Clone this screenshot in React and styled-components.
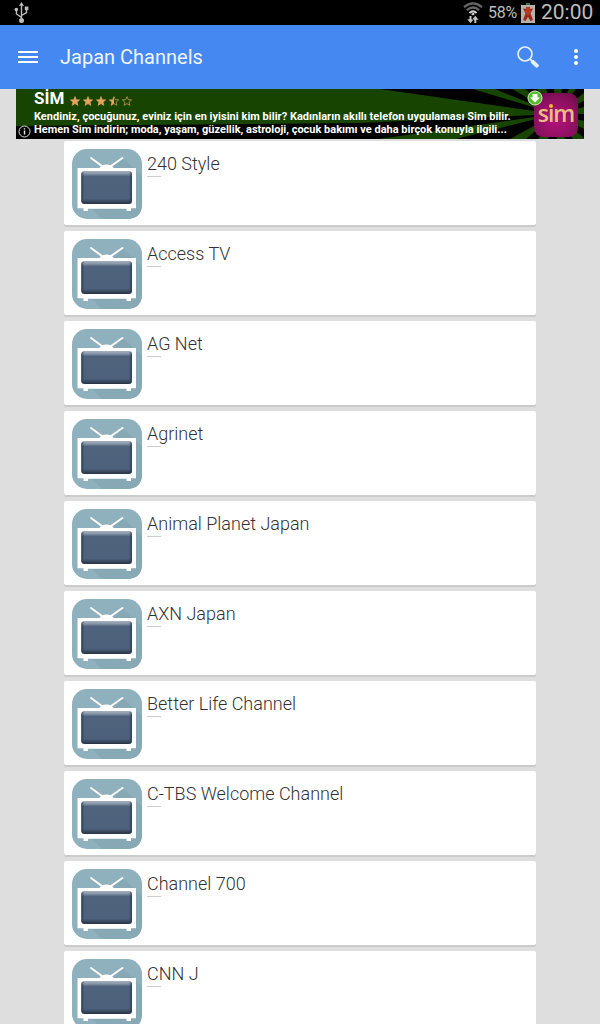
import React from 'react';
import styled, { createGlobalStyle } from 'styled-components';

const channels = [
  '240 Style',
  'Access TV',
  'AG Net',
  'Agrinet',
  'Animal Planet Japan',
  'AXN Japan',
  'Better Life Channel',
  'C-TBS Welcome Channel',
  'Channel 700',
  'CNN J',
];

const starPath = 'M5 0.6 6.3 3.7 9.6 3.9 7.1 6.1 7.9 9.4 5 7.6 2.1 9.4 2.9 6.1 0.4 3.9 3.7 3.7Z';

const App = () => (
  <Screen>
    <GlobalStyle />
    <StatusBar>
      <UsbIcon />
      <StatusRight>
        <WifiIcon />
        <Battery>58%</Battery>
        <BatteryIcon />
        <Clock>20:00</Clock>
      </StatusRight>
    </StatusBar>
    <Toolbar>
      <MenuIcon />
      <Title>Japan Channels</Title>
      <SearchIcon />
      <MoreIcon />
    </Toolbar>
    <Banner />
    <List>
      {channels.map((name) => (
        <Card key={name}>
          <TvIcon />
          <Info>
            <Name>{name}</Name>
            <Line />
          </Info>
        </Card>
      ))}
    </List>
  </Screen>
);
export default App;

const UsbIcon = () => (
  <svg width="15" height="22" viewBox="0 0 15 22" fill="#bdbdbd">
    <g fill="none" stroke="#bdbdbd" strokeWidth="1.4">
      <path d="M7.5 3v15M7.5 15.5 2.5 12V8.5M7.5 13.5l5-3V7.5" />
    </g>
    <path d="M7.5 0 10 3.8H5Z" />
    <circle cx="7.5" cy="18.5" r="2.5" />
    <circle cx="2.3" cy="7.6" r="1.8" />
    <path d="M10.8 4.5h3.6v3.6h-3.6z" />
  </svg>
);

const WifiIcon = () => (
  <svg width="20" height="23" viewBox="0 0 20 23" fill="none">
    <path d="M1 6.2Q10-1.5 19 6.2" stroke="#666" strokeWidth="2.2" />
    <path d="M3.8 9.2Q10 3.8 16.2 9.2" stroke="#666" strokeWidth="2.2" />
    <path d="M6.4 12Q10 8.8 13.6 12" stroke="#d0d0d0" strokeWidth="2" />
    <path d="M10 11.700 12 13 10 14.500 8 13Z" fill="#d0d0d0" />
    <path d="M7.500 15v4M12.300 22v-4" stroke="#c4c4c4" strokeWidth="2" />
    <path d="M4.300 18.300h6.400L7.500 22.300zM9.100 18.700h6.400l-3.200-3.900z" fill="#c4c4c4" />
  </svg>
);

const BatteryIcon = () => (
  <svg width="14" height="20" viewBox="0 0 14 20">
    <path d="M5 0h4v2h5v18H0V2h5z" fill="#b5b2ae" />
    <path d="M5 0h4v2H5z" fill="#3d7150" />
    <path d="M2 5.500 5 6 7 3.500 9 6l3-.5-2.500 5L12 17l-2.500 1L7 14l-2.500 4L2 17l2.500-6.500Z" fill="#9e2918" />
    <path d="M5 4h4l1 5-3 4-3-4z" fill="#b93a20" />
  </svg>
);

const MenuIcon = () => (
  <svg width="20" height="12" viewBox="0 0 20 12" fill="#fff">
    <path d="M0 0h20v2H0zM0 5h20v2H0zM0 10h20v2H0z" />
  </svg>
);

const SearchIcon = () => (
  <svg width="22" height="22" viewBox="0 0 22 22" fill="none" stroke="#e6f0ff">
    <circle cx="8" cy="8" r="7" strokeWidth="1.7" />
    <path d="m12.8 12.8 2.5 2.5" strokeWidth="1.8" />
    <path d="m15.8 15.8 3.9 3.9" strokeWidth="4" strokeLinecap="round" />
  </svg>
);

const MoreIcon = () => (
  <svg width="4" height="16" viewBox="0 0 4 16" fill="#fff">
    <circle cx="2" cy="2" r="2" />
    <circle cx="2" cy="8" r="2" />
    <circle cx="2" cy="14" r="2" />
  </svg>
);

const TvIcon = () => (
  <svg width="70" height="70" viewBox="0 0 70 70">
    <defs>
      <linearGradient id="screen" x1="0" y1="0" x2="0" y2="1">
        <stop offset="0" stopColor="#a5b2c0" />
        <stop offset="0.09" stopColor="#8493a5" />
        <stop offset="0.16" stopColor="#4f637d" />
        <stop offset="0.84" stopColor="#4d617c" />
        <stop offset="1" stopColor="#273243" />
      </linearGradient>
      <linearGradient id="side">
        <stop offset="0" stopColor="#27364b" stopOpacity="0.8" />
        <stop offset="0.06" stopColor="#27364b" stopOpacity="0" />
        <stop offset="0.94" stopColor="#27364b" stopOpacity="0" />
        <stop offset="1" stopColor="#27364b" stopOpacity="0.8" />
      </linearGradient>
    </defs>
    <rect width="70" height="70" rx="15" fill="#8fb0bd" />
    <path d="M51 9 70 27V55Q70 70 55 70H30L20 60H42V18Z" fill="#87a8b5" />
    <path d="m19 9 11 8M50.500 9 39 17" stroke="#fff" strokeWidth="2" strokeLinecap="round" />
    <path d="M27.500 19q1.500-3.500 7-3.500t7 3.500H64v40.300h-5V62h-4.500v-2.200H16V62h-4.500v-2.700H5.500V19Z" fill="#fff" />
    <rect x="9.300" y="22" width="50.700" height="33" rx="3.500" fill="url(#screen)" />
    <rect x="9.300" y="22" width="50.700" height="33" rx="3.500" fill="url(#side)" />
  </svg>
);

// rays fan out from behind the app logo
const Rays = () => (
  <svg width="568" height="50" viewBox="0 0 568 50">
    <rect width="568" height="50" fill="#174500" />
    <g fill="#000">
      <path d="M540 25 344 34 0 37V50H362Z" />
      <path d="M540 25 364 0H457Z" />
      <path d="M540 25 479 0H496Z" />
      <path d="M540 25 509 0H521Z" />
      <path d="M540 25 530 0H538Z" />
      <path d="M540 25 546 0H553Z" />
      <path d="M540 25 560 0H568V4Z" />
      <path d="M540 25 568 12V18Z" />
      <path d="M540 25 568 25V32Z" />
      <path d="M540 25 568 40V49Z" />
      <path d="M540 25 557 50H549Z" />
      <path d="M540 25 541 50H532Z" />
      <path d="M540 25 522 50H510Z" />
      <path d="M540 25 494 50H440Z" />
    </g>
  </svg>
);

const Star = ({ fill = 1 }) => (
  <svg width="10" height="10" viewBox="0 0 10 10">
    <path d={starPath} fill="none" stroke="#c79a55" strokeWidth="0.8" />
    {fill > 0 && (
      <path
        d={fill === 1 ? starPath : 'M5 0.6V7.6L2.1 9.4 2.9 6.1 0.4 3.9 3.7 3.7Z'}
        fill="#e3a35c"
      />
    )}
  </svg>
);

const Banner = () => (
  <BannerRow>
    <BannerBox>
      <Layer>
        <Rays />
      </Layer>
      <AdText>
        <AdTop>
          <AdName>SİM</AdName>
          <Stars>
            <Star />
            <Star />
            <Star />
            <Star fill={0.5} />
            <Star fill={0} />
          </Stars>
        </AdTop>
        <AdLine $spacing="0.02px">
          Kendiniz, çocuğunuz, eviniz için en iyisini kim bilir? Kadınların akıllı telefon uygulaması Sim bilir.
        </AdLine>
        <AdLine $spacing="0">
          Hemen Sim indirin; moda, yaşam, güzellik, astroloji, çocuk bakımı ve daha birçok konuyla ilgili...
        </AdLine>
      </AdText>
      <SimLogo>sım<SimDot /></SimLogo>
      <Download>
        <svg width="16" height="16" viewBox="0 0 16 16">
          <circle cx="8" cy="8" r="7" fill="#55ba2c" stroke="#d3f3be" />
          <path d="M5.5 4h5v3.5H13L8 12.5 3 7.5h2.5z" fill="#fff" />
        </svg>
      </Download>
      <AdInfo>
        <svg width="13" height="13" viewBox="0 0 13 13">
          <circle cx="6.500" cy="6.500" r="5.500" fill="#000" stroke="#ddd" />
          <path d="M5.800 5.500h1.400v4H5.800zM5.800 3.200h1.400v1.400H5.800z" fill="#eee" />
        </svg>
      </AdInfo>
    </BannerBox>
  </BannerRow>
);

const GlobalStyle = createGlobalStyle`
  * {
    box-sizing: border-box;
  }
  body {
    margin: 0;
    background: #dedede;
    font-family: Roboto, sans-serif;
  }
  svg {
    display: block;
    flex: none;
  }
`;

const Screen = styled.div`
  width: 600px;
  height: 1024px;
  display: flex;
  flex-direction: column;
  overflow: hidden;
  background: #dedede;
`;

//Status bar
const StatusBar = styled.div`
  flex: none;
  height: 25px;
  padding: 0 6px 0 14px;
  display: flex;
  align-items: center;
  justify-content: space-between;
  background: #000;
  color: #bdbdbd;
`;

const StatusRight = styled.div`
  display: flex;
  align-items: center;
`;

const Battery = styled.span`
  width: 30px;
  margin: 0 3px 0 5px;
  font-size: 16px;
  letter-spacing: -0.2px;
`;

const Clock = styled.span`
  width: 53px;
  margin-left: 6px;
  font-size: 21px;
  line-height: 25px;
`;

//Toolbar
const Toolbar = styled.header`
  flex: none;
  height: 64px;
  padding: 0 22px 0 18px;
  display: flex;
  align-items: center;
  background: #4688f1;
  > svg:last-child {
    margin-left: 35px;
  }
`;

const Title = styled.h1`
  flex: 1;
  margin: 0 0 0 22px;
  color: #eef5ff;
  font-size: 20px;
  font-weight: 400;
  line-height: 24px;
`;

//Ad banner
const BannerRow = styled.div`
  flex: none;
  padding: 0 16px;
`;

const BannerBox = styled.div`
  position: relative;
  height: 50px;
  overflow: hidden;
`;

const Layer = styled.div`
  position: absolute;
  inset: 0;
`;

const AdText = styled.div`
  position: relative;
  padding-left: 18px;
  color: #fff;
`;

const AdTop = styled.div`
  height: 21px;
  display: flex;
  align-items: flex-start;
`;

const AdName = styled.strong`
  width: 36px;
  font-size: 17px;
  font-weight: 700;
  line-height: 19px;
`;

const Stars = styled.div`
  display: flex;
  gap: 3px;
  padding-top: 7px;
`;

const AdLine = styled.div`
  height: 13px;
  font-size: 11px;
  font-weight: 700;
  line-height: 13px;
  white-space: nowrap;
  letter-spacing: ${(props) => props.$spacing};
`;

const SimLogo = styled.div`
  position: absolute;
  left: 518px;
  top: 4px;
  width: 44px;
  height: 44px;
  border-radius: 9px;
  background: radial-gradient(circle at 50% 60%, #b5127c, #8c1060 60%, #650a47);
  color: #e9bd83;
  font: 600 23px/40px 'Open Sans', sans-serif;
  letter-spacing: -1px;
  text-align: center;
`;

const SimDot = styled.i`
  position: absolute;
  left: 15px;
  top: 11px;
  width: 4px;
  height: 4px;
  border-radius: 50%;
  background: #f5b927;
`;

const Download = styled.div`
  position: absolute;
  left: 511px;
  top: 1px;
`;

const AdInfo = styled.div`
  position: absolute;
  left: 2px;
  top: 36px;
`;

//Channel list
const List = styled.main`
  padding: 2px 64px 0;
  display: flex;
  flex-direction: column;
  gap: 6px;
`;

const Card = styled.article`
  flex: none;
  height: 84px;
  padding: 8px;
  display: flex;
  gap: 5px;
  background: #fff;
  border-radius: 2px;
  box-shadow: 0 2px 0 #cbcbcb;
`;

const Info = styled.div`
  padding-top: 4px;
`;

const Name = styled.h2`
  margin: 0;
  color: #333;
  font-size: 18px;
  font-weight: 300;
  line-height: 22px;
`;

const Line = styled.div`
  width: 14px;
  height: 1px;
  margin-top: 1px;
  background: #ccc;
`;
